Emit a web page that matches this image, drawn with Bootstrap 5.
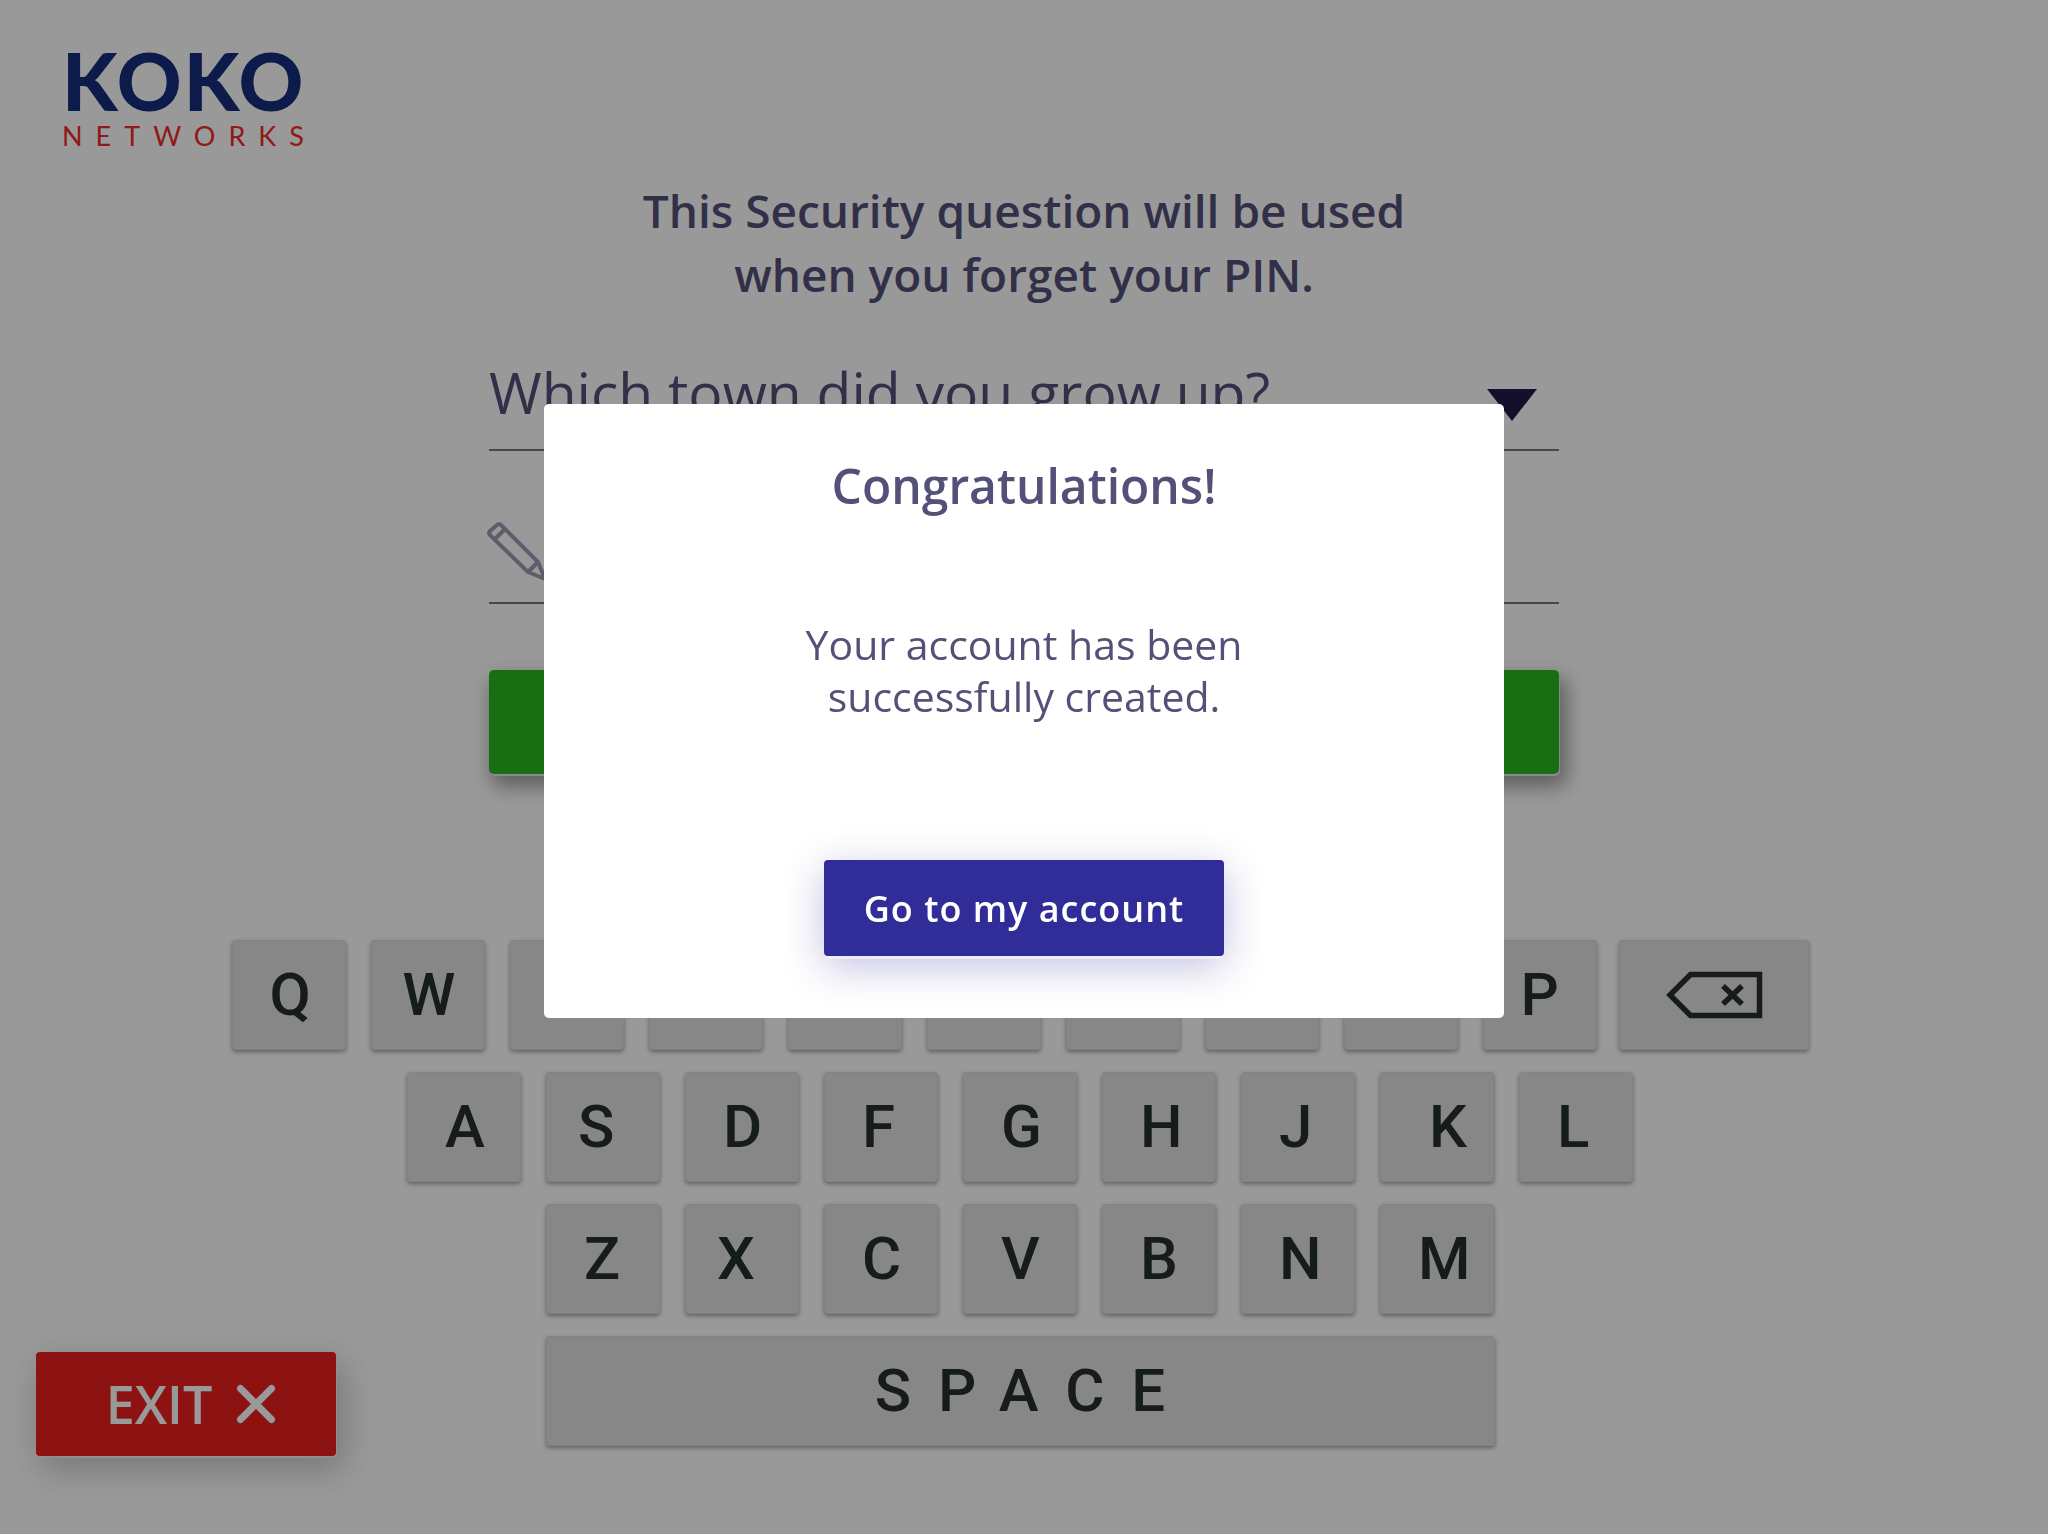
<!DOCTYPE html>
<html lang="en">
<head>
<meta charset="utf-8">
<meta name="viewport" content="width=device-width, initial-scale=1">
<title>KOKO Networks – Security question</title>
<link href="https://cdn.jsdelivr.net/npm/bootstrap@5.3.0/dist/css/bootstrap.min.css" rel="stylesheet">
<style>
  :root { --ink: #545179; }
  body { font-family: "Open Sans", "Noto Sans", sans-serif; color: var(--ink); background: #fff; }

  .brand { padding: 34px 62px 0; height: 178px; width: max-content; font-family: Lato, sans-serif; }
  .brand-name { font-size: 80px; line-height: 92px; font-weight: 900; letter-spacing: 2px; color: #172d7d; }
  .brand-sub { font-size: 27px; line-height: 20px; letter-spacing: 13px; color: #f02a2c; }

  .headline { font-size: 46px; line-height: 64px; font-weight: 600; }

  .question-form { width: 1070px; max-width: 100%; }
  .line-field { border-bottom: 2px solid #777; }
  .field-question { height: 121px; margin-top: 24px; padding-top: 4px; }
  .field-answer { height: 153px; }
  .field-arrow { margin: 26px 22px 0 0; }
  .field-pencil { margin-top: 50px; }
  .line-select { appearance: none; border: 0; background: none; padding: 0; color: var(--ink);
    font-size: 57px; line-height: 80px; outline: 0; }
  .line-input { border: 0; background: none; font-size: 57px; outline: 0; }
  .btn-submit { height: 104px; margin-top: 66px; background: #2bb720; border-radius: 5px;
    box-shadow: 1px 2px 0 #e6e6e6, 5px 10px 20px 2px rgba(0,0,0,.4); }

  .keyboard { padding: 166px 8px 60px 0; }
  .key-rows { gap: 22px; }
  .key-group { gap: 25px; }
  .key-btn { width: 114px; height: 110px; padding: 0 0 0 37px; text-align: left; border: 1px solid #dadada;
    border-radius: 4px; background: #e1e1e1; color: #262d30; font-family: Roboto, sans-serif;
    font-size: 60px; line-height: 60px; font-weight: 500; box-shadow: 0 2px 4px rgba(60,40,40,.45); }
  .key-near { padding-left: 31px; }
  .key-back { width: 190px; padding: 0; text-align: center; }
  .key-space { width: 949px; padding: 0; text-align: center; letter-spacing: 27px; text-indent: 27px; }
  .bottom-row { display: grid; grid-template-columns: 1fr auto 1fr; align-items: start; }

  .btn-exit { width: 300px; height: 104px; margin: 16px 0 0 36px; gap: 24px; padding-left: 16px;
    border: 0; border-radius: 4px; background: #eb2021; color: #fff; font-size: 52px; line-height: 60px; font-weight: 600;
    box-shadow: 1px 2px 0 #f0f0f0, 6px 12px 36px rgba(0,0,0,.24); }

  .modal-backdrop.dim { --bs-backdrop-opacity: .4; height: auto; bottom: 2px; }
  .modal.notice { overflow: hidden; }
  .notice-dialog { max-width: 960px; margin-top: 404px; margin-bottom: 0; }
  .notice-card { height: 614px; padding-top: 50px; border: 0; border-radius: 5px; color: var(--ink); }
  .notice-title { font-size: 48px; line-height: 64px; font-weight: 600; }
  .notice-text { font-size: 41px; line-height: 52px; margin: 100px 0 138px; }
  .btn-account { width: 400px; height: 96px; padding-top: 2px; border: 0; border-radius: 4px; background: #302c98; color: #fff;
    font-size: 36px; font-weight: 600; letter-spacing: 1px;
    box-shadow: 0 3px 0 #eeedf6, 0 10px 40px rgba(48,44,152,.3); }
</style>
</head>
<body>
<main>
  <header class="brand">
    <div class="brand-name">KOKO</div>
    <div class="brand-sub">NETWORKS</div>
  </header>

  <h1 class="headline text-center mb-0">This Security question will be used<br>when you forget your PIN.</h1>

  <form class="question-form mx-auto">
    <div class="line-field field-question d-flex align-items-center">
      <select class="line-select flex-grow-1" aria-label="Security question">
        <option>Which town did you grow up?</option>
      </select>
      <svg class="field-arrow flex-shrink-0" width="50" height="32" viewBox="0 0 50 32" aria-hidden="true"><path d="M0 0H50L25 32Z" fill="#211c4e"/></svg>
    </div>
    <div class="line-field field-answer d-flex align-items-center">
      <svg class="field-pencil flex-shrink-0" width="60" height="60" viewBox="0 0 60 60" fill="none" stroke="#9e9bb2" stroke-width="4" stroke-linejoin="round" overflow="visible" aria-hidden="true">
        <path d="M1 13Q-1 11 1 9L8 3Q10 1 12 3L49 40L56 57L39 50Z"/><path d="M6 17L16 7M39 50L49 40"/>
      </svg>
      <input class="line-input flex-grow-1" type="text" aria-label="Answer">
    </div>
    <button type="button" class="btn btn-submit w-100 border-0" aria-label="Submit"></button>
  </form>

  <section class="keyboard" aria-label="Keyboard">
    <div class="key-rows d-flex flex-column">
      <div class="d-flex justify-content-center key-rows">
        <div class="key-group d-flex">
          <button class="key-btn">Q</button><button class="key-btn key-near">W</button><button class="key-btn">E</button><button class="key-btn">R</button><button class="key-btn">T</button><button class="key-btn">Y</button><button class="key-btn">U</button><button class="key-btn">I</button><button class="key-btn">O</button><button class="key-btn">P</button>
        </div>
        <button class="key-btn key-back" aria-label="Backspace">
          <svg class="d-block mx-auto" width="98" height="48" viewBox="0 0 98 48" fill="none" stroke="#262d30" stroke-width="5.500" aria-hidden="true"><path d="M5 24L25.500 3.500H94.500V44.500H25.500Z"/><path d="M58 15L77 33M77 15L58 33" stroke-width="5.500"/></svg>
        </button>
      </div>
      <div class="key-group d-flex justify-content-center">
        <button class="key-btn">A</button><button class="key-btn key-near">S</button><button class="key-btn">D</button><button class="key-btn">F</button><button class="key-btn">G</button><button class="key-btn">H</button><button class="key-btn">J</button><button class="key-btn ps-5">K</button><button class="key-btn">L</button>
      </div>
      <div class="key-group d-flex justify-content-center">
        <button class="key-btn">Z</button><button class="key-btn key-near">X</button><button class="key-btn">C</button><button class="key-btn">V</button><button class="key-btn">B</button><button class="key-btn">N</button><button class="key-btn">M</button>
      </div>
      <div class="bottom-row">
        <button class="btn-exit d-flex align-items-center justify-content-center">EXIT
          <svg width="40" height="40" viewBox="0 0 40 40" stroke="#fff" stroke-width="7" stroke-linecap="round" aria-hidden="true"><path d="M4.500 4.500L35.500 35.500M35.500 4.500L4.500 35.500"/></svg>
        </button>
        <button class="key-btn key-space">SPACE</button>
      </div>
    </div>
  </section>
</main>

<div class="modal-backdrop dim show"></div>
<div class="modal notice d-block" role="dialog" aria-modal="true" aria-labelledby="noticeTitle">
  <div class="modal-dialog notice-dialog">
    <div class="modal-content notice-card align-items-center text-center">
      <h2 class="notice-title mb-0" id="noticeTitle">Congratulations!</h2>
      <p class="notice-text">Your account has been<br>successfully created.</p>
      <button type="button" class="btn-account">Go to my account</button>
    </div>
  </div>
</div>
<script src="https://cdn.jsdelivr.net/npm/bootstrap@5.3.0/dist/js/bootstrap.bundle.min.js"></script>
</body>
</html>
